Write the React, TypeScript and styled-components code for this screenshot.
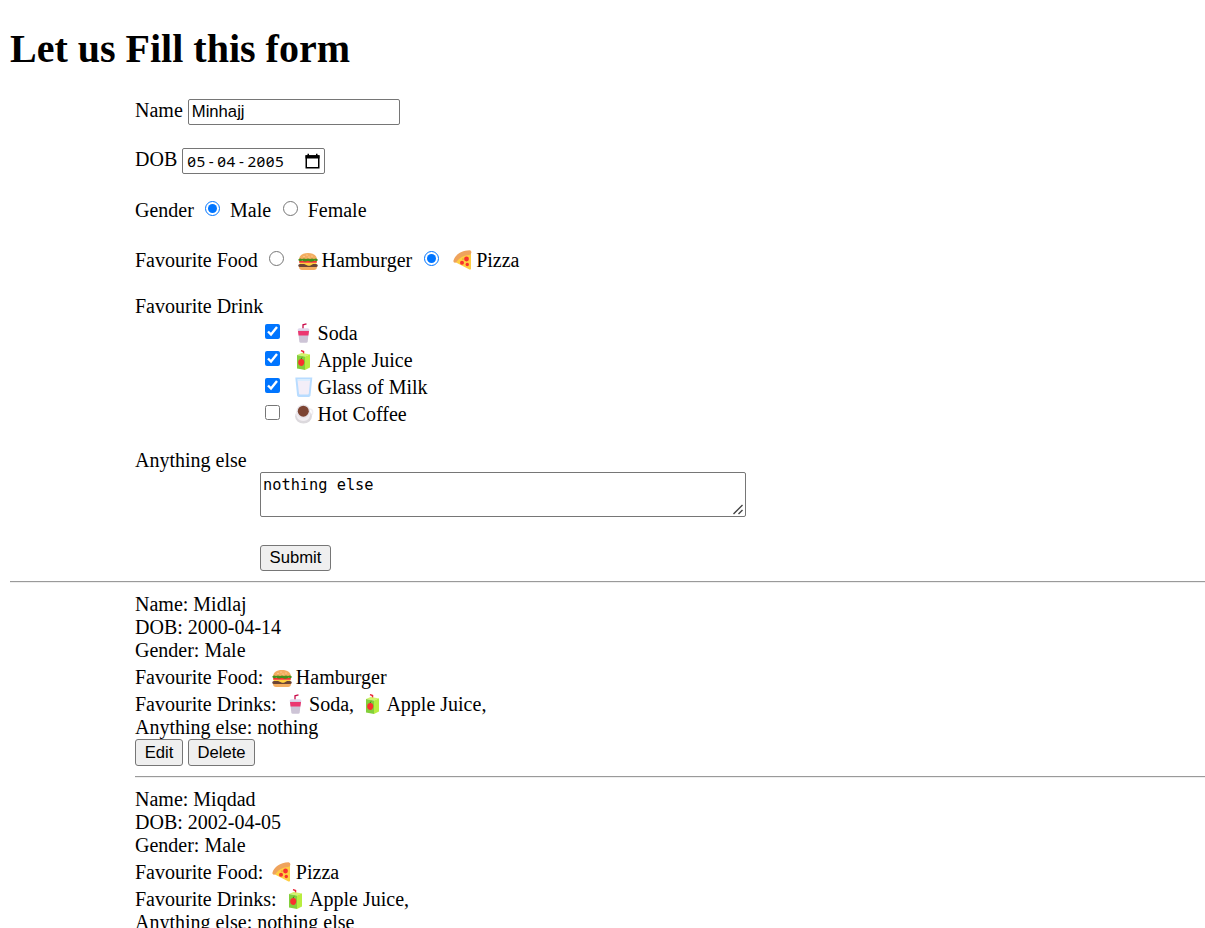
import React, { useState } from "react";
import styled, { createGlobalStyle } from "styled-components";

const GlobalStyle = createGlobalStyle`
  html { overflow: hidden; }
  body {
    margin: 0;
    background: #fff;
    color: #000;
    font: 20px/23px "Liberation Serif", "Times New Roman", serif;
  }
  * { box-sizing: border-box; }
`;

const Page = styled.main`
  height: 928px;
  overflow: hidden;
  padding: 26px 0 0 10px;
`;

const Title = styled.h1`
  margin: 0 0 27px;
  font-size: 40px;
  line-height: 46px;
`;

const Form = styled.form`
  margin: 0 0 0 125px;
`;

const Row = styled.div<{ $h?: number; $gap?: number }>`
  display: flex;
  align-items: flex-end;
  height: ${(p) => p.$h ?? 23}px;
  margin-bottom: ${(p) => p.$gap ?? 0}px;
  white-space: pre;
`;

const FieldRow = styled.label`
  display: flex;
  align-items: flex-start;
  gap: 5px;
  height: 26px;
  margin-bottom: 23px;
`;

const TextInput = styled.input`
  width: 212px;
  height: 26px;
  padding: 0 3px 1px;
  border: 1px solid #767676;
  border-radius: 2px;
  background: #fff;
  font: 16.667px "Liberation Sans", Arial, sans-serif;
`;

const DateBox = styled.span`
  display: flex;
  align-items: center;
  justify-content: space-between;
  width: 143px;
  height: 26px;
  padding: 0 4px 1px 4px;
  border: 1px solid #767676;
  border-radius: 2px;
  font: 15.3px/20px "Noto Sans", sans-serif;
  font-feature-settings: "zero";
`;

const DateParts = styled.span`
  display: flex;
  gap: 1.25px;
  letter-spacing: 0.45px;
`;

const Dash = styled.span`
  width: 9.2px;
  text-align: center;
`;

const Choice = styled.input<{ $left: number; $right: number; $up: number }>`
  flex: none;
  width: 15px;
  height: 15px;
  margin: 0 ${(p) => p.$right}px ${(p) => p.$up}px ${(p) => p.$left}px;
`;

const Indent = styled.div`
  margin-left: 125px;
`;

const NotesWrap = styled.div`
  position: relative;
  width: 486px;
  height: 45px;
  margin-bottom: 28px;
`;

const Notes = styled.textarea`
  display: block;
  width: 100%;
  height: 100%;
  padding: 2px;
  border: 1px solid #767676;
  border-radius: 2px;
  font: 15.3px/20px "DejaVu Sans Mono", monospace;
  overflow: hidden;
  resize: none;
`;

const Grip = styled.svg`
  position: absolute;
  right: 2px;
  bottom: 2px;
`;

const Button = styled.button<{ $w: number; $h?: number }>`
  display: block;
  width: ${(p) => p.$w}px;
  height: ${(p) => p.$h ?? 27}px;
  padding: 0;
  border: 1px solid #767676;
  border-radius: 3px;
  background: #efefef;
  color: #000;
  font: 16.667px "Liberation Sans", Arial, sans-serif;
`;

const Rule = styled.hr`
  height: 2px;
  margin: 10px 0;
  border: 0;
  border-top: 1px solid #9a9a9a;
  border-bottom: 1px solid #eee;
`;

const Record = styled.section`
  margin-left: 125px;
`;

const Actions = styled.div`
  display: flex;
  gap: 5px;
`;

const Glyph = styled.svg<{ $left: number; $right: number; $up: number }>`
  flex: none;
  width: 20px;
  height: 20px;
  margin: 0 ${(p) => p.$right}px ${(p) => p.$up}px ${(p) => p.$left}px;
`;

type Kind = "burger" | "pizza" | "soda" | "juice" | "milk" | "coffee";

const drawings: Record<Kind, React.ReactNode> = {
  burger: (
    <>
      <path d="M1 9C1 4.500 4.500 2 10 2s9 2.500 9 7z" fill="#f3ad61" />
      <path d="M1 15h18v1c0 2-1.300 3-3 3H4c-1.700 0-3-1-3-3z" fill="#f3ad61" />
      <rect x="0.300" y="13" width="19.400" height="3" rx="1.500" fill="#6d4534" />
      <path d="M1 11.500h18l-1 1.500H2z" fill="#ffcf3f" />
      <path d="M5 12.500h11l-4 2.200h-2z" fill="#ffcf3f" />
      <rect x="1" y="10" width="18" height="1.700" rx=".8" fill="#f8312f" />
      <path d="M.5 8.300Q2 7 4 8q2-1 4 0 2-1 4 0 2-1 4 0 2-1 3.500.3c1 1.500-1 2.500-2 1.700-1.500-.6-2.500.8-4 .8s-2-.8-3.500-.8-2 .7-3.500.5-2-1-3-.5C1.500 10.600 0 9.700.5 8.300z" fill="#44911b" />
      <g fill="#ffe3b0"><circle cx="6" cy="5.500" r=".6" /><circle cx="9" cy="4" r=".6" /><circle cx="11" cy="6" r=".6" /><circle cx="14" cy="5" r=".6" /></g>
    </>
  ),
  pizza: (
    <>
      <path d="M3 9 16 2.500 18 4v15q-1 1-2 .2L2 12z" fill="#ffce42" />
      <path d="M.5 10.500C2 5 8 .5 16.500.2q2 .2 1.900 2.300T16 5C9.500 5.500 6.500 8 3.500 12 2 13.300 0 12.500.5 10.500z" fill="#efa35c" />
      <g fill="#f8312f"><circle cx="13.500" cy="9" r="2.400" /><circle cx="9" cy="12.800" r="2" /><circle cx="14.300" cy="14.500" r="1.700" /></g>
      <circle cx="10" cy="9" r=".6" fill="#ad7b20" />
    </>
  ),
  soda: (
    <>
      <path d="M8 6V1.800L11.500.8" fill="none" stroke="#ca0b4a" strokeWidth="1.300" />
      <path d="M3 7h11l-1.300 11.500q-.2 1.200-1.400 1.200H5.700q-1.200 0-1.400-1.200z" fill="#cdc4d6" />
      <path d="M3 8h11l-.6 4.500H3.600z" fill="#ec3770" />
      <path d="M4 5.200h9q1.500.6 1.500 2.300h-12Q2.500 5.800 4 5.200z" fill="#e1d8ec" />
    </>
  ),
  juice: (
    <>
      <path d="M8.500 4V1.500L6 .6" fill="none" stroke="#e9283b" strokeWidth="1.500" />
      <path d="M2 5 6.500 3l8 1.300-4 2.200z" fill="#d3f36c" />
      <path d="M2 5l8 1.500V20l-8-1.500z" fill="#83cf3b" />
      <path d="M10 6.500l5-2.200v13.200L10 20z" fill="#b8ed3f" />
      <path d="M6.300 9c2.200.1 3.200 1.500 3 3.800-.3 2.200-1.600 3.500-3.200 3.200-2-.2-3.100-2-2.900-4 .1-2 1.300-3 3.100-3z" fill="#f8312f" />
      <path d="M6 9 7 7.500" stroke="#327a20" />
    </>
  ),
  milk: (
    <>
      <path d="M.3.5h17l-1.800 17.700Q15.300 20 13.700 20H3.900Q2.300 20 2.100 18.200z" fill="#b8dcff" />
      <path d="M2.500 3.300h12.600l-1.300 13.300q-.1.900-1 .9H5q-.9 0-1-.9z" fill="#f3eef8" />
      <path d="M2.300 2h13l-.2 1.800H2.500z" fill="#d9eeff" />
    </>
  ),
  coffee: (
    <>
      <circle cx="14.500" cy="8.300" r="3.200" fill="none" stroke="#f1eef2" strokeWidth="1.500" />
      <ellipse cx="8.500" cy="12.500" rx="8.400" ry="7" fill="#dcd9dd" />
      <path d="M1 8h14.500c0 5-2 9-7.200 9S1 13 1 8z" fill="#f1eef2" />
      <circle cx="8.300" cy="7.400" r="6.800" fill="#e8e4e9" />
      <circle cx="8.300" cy="7.200" r="5.500" fill="#7d4533" />
    </>
  ),
};

function Emoji({ kind, left = 0, right = 3, up = 1 }: { kind: Kind; left?: number; right?: number; up?: number }) {
  return (
    <Glyph viewBox="0 0 20 20" $left={left} $right={right} $up={up} aria-hidden>
      {drawings[kind]}
    </Glyph>
  );
}

const drinkOptions: { kind: Kind; label: string; checked: boolean }[] = [
  { kind: "soda", label: "Soda", checked: true },
  { kind: "juice", label: "Apple Juice", checked: true },
  { kind: "milk", label: "Glass of Milk", checked: true },
  { kind: "coffee", label: "Hot Coffee", checked: false },
];

interface Entry {
  name: string;
  dob: string;
  food: { kind: Kind; label: string };
  drinks: { kind: Kind; label: string }[];
  notes: string;
}

const entries: Entry[] = [
  {
    name: "Midlaj",
    dob: "2000-04-14",
    food: { kind: "burger", label: "Hamburger" },
    drinks: [{ kind: "soda", label: "Soda" }, { kind: "juice", label: "Apple Juice" }],
    notes: "nothing",
  },
  {
    name: "Miqdad",
    dob: "2002-04-05",
    food: { kind: "pizza", label: "Pizza" },
    drinks: [{ kind: "juice", label: "Apple Juice" }],
    notes: "nothing else",
  },
];

export default function App() {
  const [name, setName] = useState("Minhajj");
  return (
    <Page>
      <GlobalStyle />
      <Title>Let us Fill this form</Title>
      <Form onSubmit={(e) => e.preventDefault()}>
        <FieldRow>
          Name
          <TextInput value={name} onChange={(e) => setName(e.target.value)} />
        </FieldRow>
        <FieldRow>
          DOB
          <DateBox>
            <DateParts>
              <span>05</span><Dash>-</Dash><span>04</span><Dash>-</Dash><span>2005</span>
            </DateParts>
            <svg width="15" height="16" viewBox="0 0 15 16" aria-hidden>
              <path d="M1.250 3h12.500v11.750H1.250z" fill="none" stroke="#000" strokeWidth="1.500" />
              <path d="M.5 2.250h14V5.500H.5zM2.500.7h1.500v2H2.500zM11 .7h1.500v2H11z" />
            </svg>
          </DateBox>
        </FieldRow>
        <Row $h={25} $gap={23}>
          Gender
          <Choice type="radio" name="gender" defaultChecked $left={11.2} $right={10} $up={6} />
          Male
          <Choice type="radio" name="gender" $left={11.5} $right={10} $up={6} />
          Female
        </Row>
        <Row $h={27} $gap={23}>
          Favourite Food
          <Choice type="radio" name="food" $left={11} $right={14} $up={6} />
          <Emoji kind="burger" right={3.7} />
          Hamburger
          <Choice type="radio" name="food" defaultChecked $left={11.5} $right={14.5} $up={6} />
          <Emoji kind="pizza" up={2} />
          Pizza
        </Row>
        <Row>Favourite Drink</Row>
        <Indent>
          {drinkOptions.map((d) => (
            <Row key={d.label} $h={27}>
              <Choice type="checkbox" defaultChecked={d.checked} $left={5} $right={15} $up={6} />
              <Emoji kind={d.kind} right={2.6} up={2} />
              {d.label}
            </Row>
          ))}
        </Indent>
        <Row $h={46}>Anything else</Row>
        <Indent>
          <NotesWrap>
            <Notes defaultValue="nothing else" spellCheck={false} />
            <Grip width="12" height="12" viewBox="0 0 12 12" aria-hidden>
              <path d="M1.500 11 10.500 2M6.500 11l4-4" fill="none" stroke="#444" strokeWidth="1.400" />
            </Grip>
          </NotesWrap>
          <Button $w={71} $h={26}>Submit</Button>
        </Indent>
      </Form>
      <Rule />
      {entries.map((e) => (
        <Record key={e.name}>
          <Row>Name: {e.name}</Row>
          <Row>DOB: {e.dob}</Row>
          <Row>Gender: Male</Row>
          <Row $h={27}>
            Favourite Food: <Emoji kind={e.food.kind} left={4} right={3.5} up={e.food.kind === "pizza" ? 2 : 1} />
            {e.food.label}
          </Row>
          <Row $h={27}>
            Favourite Drinks: {e.drinks.map((d) => (
              <React.Fragment key={d.label}>
                <Emoji kind={d.kind} left={5.2} right={2.2} up={2} />
                {d.label},{" "}
              </React.Fragment>
            ))}
          </Row>
          <Row>Anything else: {e.notes}</Row>
          <Actions>
            <Button $w={48}>Edit</Button>
            <Button $w={67}>Delete</Button>
          </Actions>
          <Rule />
        </Record>
      ))}
    </Page>
  );
}
